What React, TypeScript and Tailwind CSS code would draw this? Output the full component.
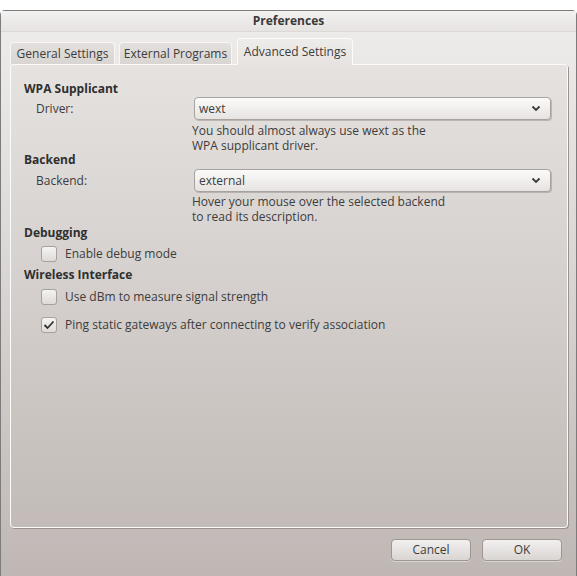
import React from 'react';

const font = { fontFamily: '"Open Sans", "Noto Sans", sans-serif' };

function Chevron() {
    return (
        <svg width="10" height="7" viewBox="0 0 10 7" className="text-[#3a3a3a]">
            <path d="M1.5 1.5 L5 5 L8.5 1.5" fill="none" stroke="currentColor" strokeWidth="1.8" />
        </svg>
    );
}

function Combo({ value }: { value: string }) {
    return (
        <div className="w-[357px] h-[23px] flex items-center justify-between pl-[4px] pr-[9px] rounded-[4px] border border-[#a8a29f] bg-gradient-to-b from-[#fbfbfa] to-[#e6e3e1] shadow-[1px_1px_0_rgba(120,110,105,0.35)] text-[12px] text-[#3c3c3c]">
            <span>{value}</span>
            <Chevron />
        </div>
    );
}

function Check({ checked, label }: { checked?: boolean; label: string }) {
    return (
        <div className="flex items-center h-[16px] pl-[17px]">
            <div className="w-[16px] h-[16px] rounded-[3px] border border-[#a7a09d] bg-gradient-to-b from-[#f5f4f3] to-[#dedad8] flex items-center justify-center">
                {checked && (
                    <svg width="12" height="10" viewBox="0 0 12 10">
                        <path d="M1.5 5 L4.5 8 L10.5 1.5" fill="none" stroke="#333" strokeWidth="1.8" />
                    </svg>
                )}
            </div>
            <span className="ml-[8px] text-[12px] text-[#3c3c3c]">{label}</span>
        </div>
    );
}

function Help({ lines }: { lines: string[] }) {
    return (
        <div className="ml-[168px] text-[12px] text-[#3c3c3c]">
            {lines.map((l) => (
                <div key={l} className="h-[15px] leading-[15px]">{l}</div>
            ))}
        </div>
    );
}

export default function App() {
    const tabs = [
        { name: 'General Settings', w: 'w-[105px]' },
        { name: 'External Programs', w: 'w-[113px]' },
    ];

    return (
        <div className="w-[577px] h-[576px] bg-white pt-[10px]" style={font}>
            <div className="h-[566px] flex flex-col rounded-t-[5px] border border-b-0 border-[#7c7c7c] bg-gradient-to-b from-[#efedec] via-[#d8d4d2] to-[#bfb7b4]">
                {/* Title */}
                <div className="h-[21px] flex items-center justify-center text-[12px] font-bold text-[#3a3a3a] bg-gradient-to-b from-[#f3f2f1] to-[#e6e3e1] border-b border-[#dcd8d6]">
                    Preferences
                </div>

                {/* Tabs */}
                <div className="flex items-end pl-[9px] h-[32px] gap-[4px]">
                    {tabs.map((t) => (
                        <div
                            key={t.name}
                            className={`${t.w} h-[22px] flex items-center justify-center rounded-t-[4px] border border-b-0 border-[#f7f6f5] bg-gradient-to-b from-[#e2dfdd] to-[#d9d5d3] text-[12px] text-[#3c3c3c]`}
                        >
                            {t.name}
                        </div>
                    ))}
                    <div className="ml-[1px] w-[116px] h-[27px] -mb-[1px] flex items-start pt-[4px] justify-center rounded-t-[4px] border border-b-0 border-[#fbfbfb] bg-gradient-to-b from-[#eeecea] to-[#e6e3e1] text-[12px] text-[#3c3c3c] relative z-10">
                        Advanced Settings
                    </div>
                </div>

                {/* Panel */}
                <div className="mx-[9px] w-[558px] h-[464px] rounded-[4px] border border-[#fbfbfa] shadow-[1px_1px_0_#9b9390] bg-gradient-to-b from-[#e5e2e0] via-[#d4cfcc] to-[#c2bbb8] pl-[13px] text-[#3c3c3c]">
                    <div className="mt-[16px] h-[16px] leading-[16px] text-[12px] font-bold text-[#2f2f2f]">WPA Supplicant</div>
                    <div className="flex items-center">
                        <span className="w-[170px] pl-[12px] text-[12px]">Driver:</span>
                        <Combo value="wext" />
                    </div>
                    <div className="mt-[3px]">
                        <Help lines={['You should almost always use wext as the', 'WPA supplicant driver.']} />
                    </div>

                    <div className="-mt-[1px] h-[16px] leading-[16px] text-[12px] font-bold text-[#2f2f2f]">Backend</div>
                    <div className="mt-[1px] flex items-center">
                        <span className="w-[170px] pl-[12px] text-[12px]">Backend:</span>
                        <Combo value="external" />
                    </div>
                    <div className="mt-[2px]">
                        <Help lines={['Hover your mouse over the selected backend', 'to read its description.']} />
                    </div>

                    <div className="mt-[1px] h-[16px] leading-[16px] text-[12px] font-bold text-[#2f2f2f]">Debugging</div>
                    <div className="mt-[5px]">
                        <Check label="Enable debug mode" />
                    </div>

                    <div className="mt-[5px] h-[16px] leading-[16px] text-[12px] font-bold text-[#2f2f2f]">Wireless Interface</div>
                    <div className="mt-[6px]">
                        <Check label="Use dBm to measure signal strength" />
                    </div>
                    <div className="mt-[12px]">
                        <Check checked label="Ping static gateways after connecting to verify association" />
                    </div>
                </div>

                {/* Buttons */}
                <div className="flex justify-end gap-[11px] pr-[14px] mt-[11px]">
                    {['Cancel', 'OK'].map((b) => (
                        <div
                            key={b}
                            className="w-[80px] h-[22px] flex items-center justify-center rounded-[4px] border border-[#9e9693] bg-gradient-to-b from-[#f2f0ef] to-[#d9d5d3] shadow-[0_1px_0_rgba(255,255,255,0.4)] text-[12px] text-[#3c3c3c]"
                        >
                            {b}
                        </div>
                    ))}
                </div>
            </div>
        </div>
    );
}
